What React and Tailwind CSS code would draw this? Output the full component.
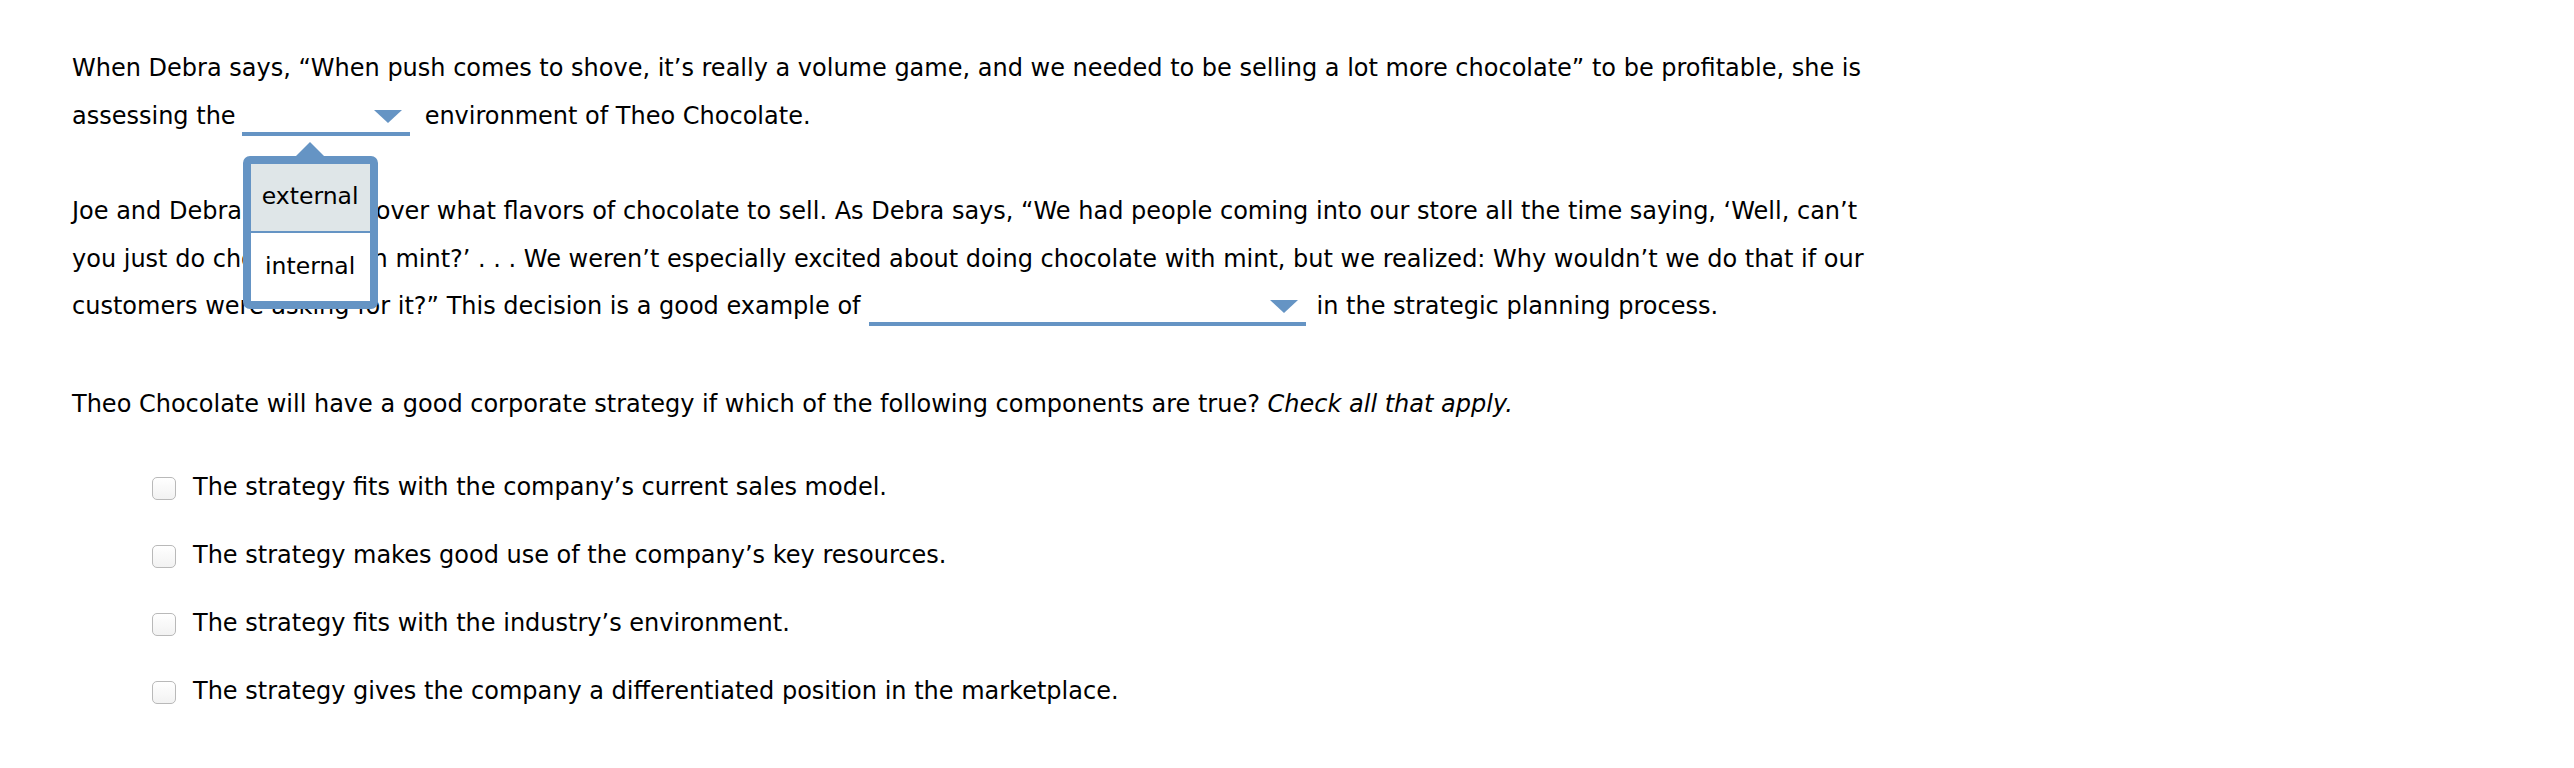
import React from "react";

function Arrow() {
  return (
    <svg className="absolute right-[8px] top-[4px]" width="28" height="13" viewBox="0 0 28 13">
      <polygon points="0,0 28,0 14,13" fill="#6594c4" />
    </svg>
  );
}

function Drop({ w, cls, children }) {
  return (
    <span
      className={"relative inline-block h-[30px] border-b-4 border-[#6594c4] align-[-12px] " + cls}
      style={{ width: w }}
    >
      <Arrow />
      {children}
    </span>
  );
}

function Popup() {
  return (
    <span className="absolute left-[1px] top-[50px] z-10 block w-[135px]">
      <svg className="absolute left-[52px] top-[-14px]" width="30" height="15" viewBox="0 0 30 15">
        <polygon points="0,15 15,0 30,15" fill="#6594c4" />
      </svg>
      <span className="block rounded-[7px] border-[8px] border-[#6594c4] bg-white">
        <span className="flex h-[67px] items-center justify-center bg-[#dfe6e8] text-[23.5px] leading-none text-black">
          external
        </span>
        <span className="block h-[2px] bg-[#6594c4]" />
        <span className="flex h-[68px] items-center justify-center bg-white text-[23.5px] leading-none text-black">
          internal
        </span>
      </span>
    </span>
  );
}

function Check({ children }) {
  return (
    <div className="flex h-[48px] items-center">
      <span className="ml-[80px] inline-block h-[23px] w-[24px] shrink-0 rounded-[5px] border border-[#b9b9b9] bg-gradient-to-b from-white to-[#f2f2f2]" />
      <span className="ml-[17px]">{children}</span>
    </div>
  );
}

export default function App() {
  return (
    <div className="min-h-screen bg-white pl-[72px] pt-[45px] font-['DejaVu_Sans',Verdana,sans-serif] text-[24px] leading-[47.5px] text-black">
      <p className="whitespace-nowrap">
        When Debra says, “When push comes to shove, it’s really a volume game, and we needed to be selling a lot more chocolate” to be profitable, she is
        <br />
        assessing the
        <Drop w={168} cls="ml-[6px] mr-[15px]">
          <Popup />
        </Drop>
        environment of Theo Chocolate.
      </p>
      <p className="mt-[48px] whitespace-nowrap">
        Joe and Debra disagreed over what flavors of chocolate to sell. As Debra says, “We had people coming into our store all the time saying, ‘Well, can’t
        <br />
        you just do chocolate with mint?’ . . . We weren’t especially excited about doing chocolate with mint, but we realized: Why wouldn’t we do that if our
        <br />
        customers were asking for it?” This decision is a good example of
        <Drop w={437} cls="ml-[8px] mr-[11px]" />
        in the strategic planning process.
      </p>
      <p className="mt-[50px] whitespace-nowrap">
        Theo Chocolate will have a good corporate strategy if which of the following components are true? <i>Check all that apply.</i>
      </p>
      <div className="mt-[36px] flex flex-col gap-[20px] whitespace-nowrap">
        <Check>The strategy fits with the company’s current sales model.</Check>
        <Check>The strategy makes good use of the company’s key resources.</Check>
        <Check>The strategy fits with the industry’s environment.</Check>
        <Check>The strategy gives the company a differentiated position in the marketplace.</Check>
      </div>
    </div>
  );
}
